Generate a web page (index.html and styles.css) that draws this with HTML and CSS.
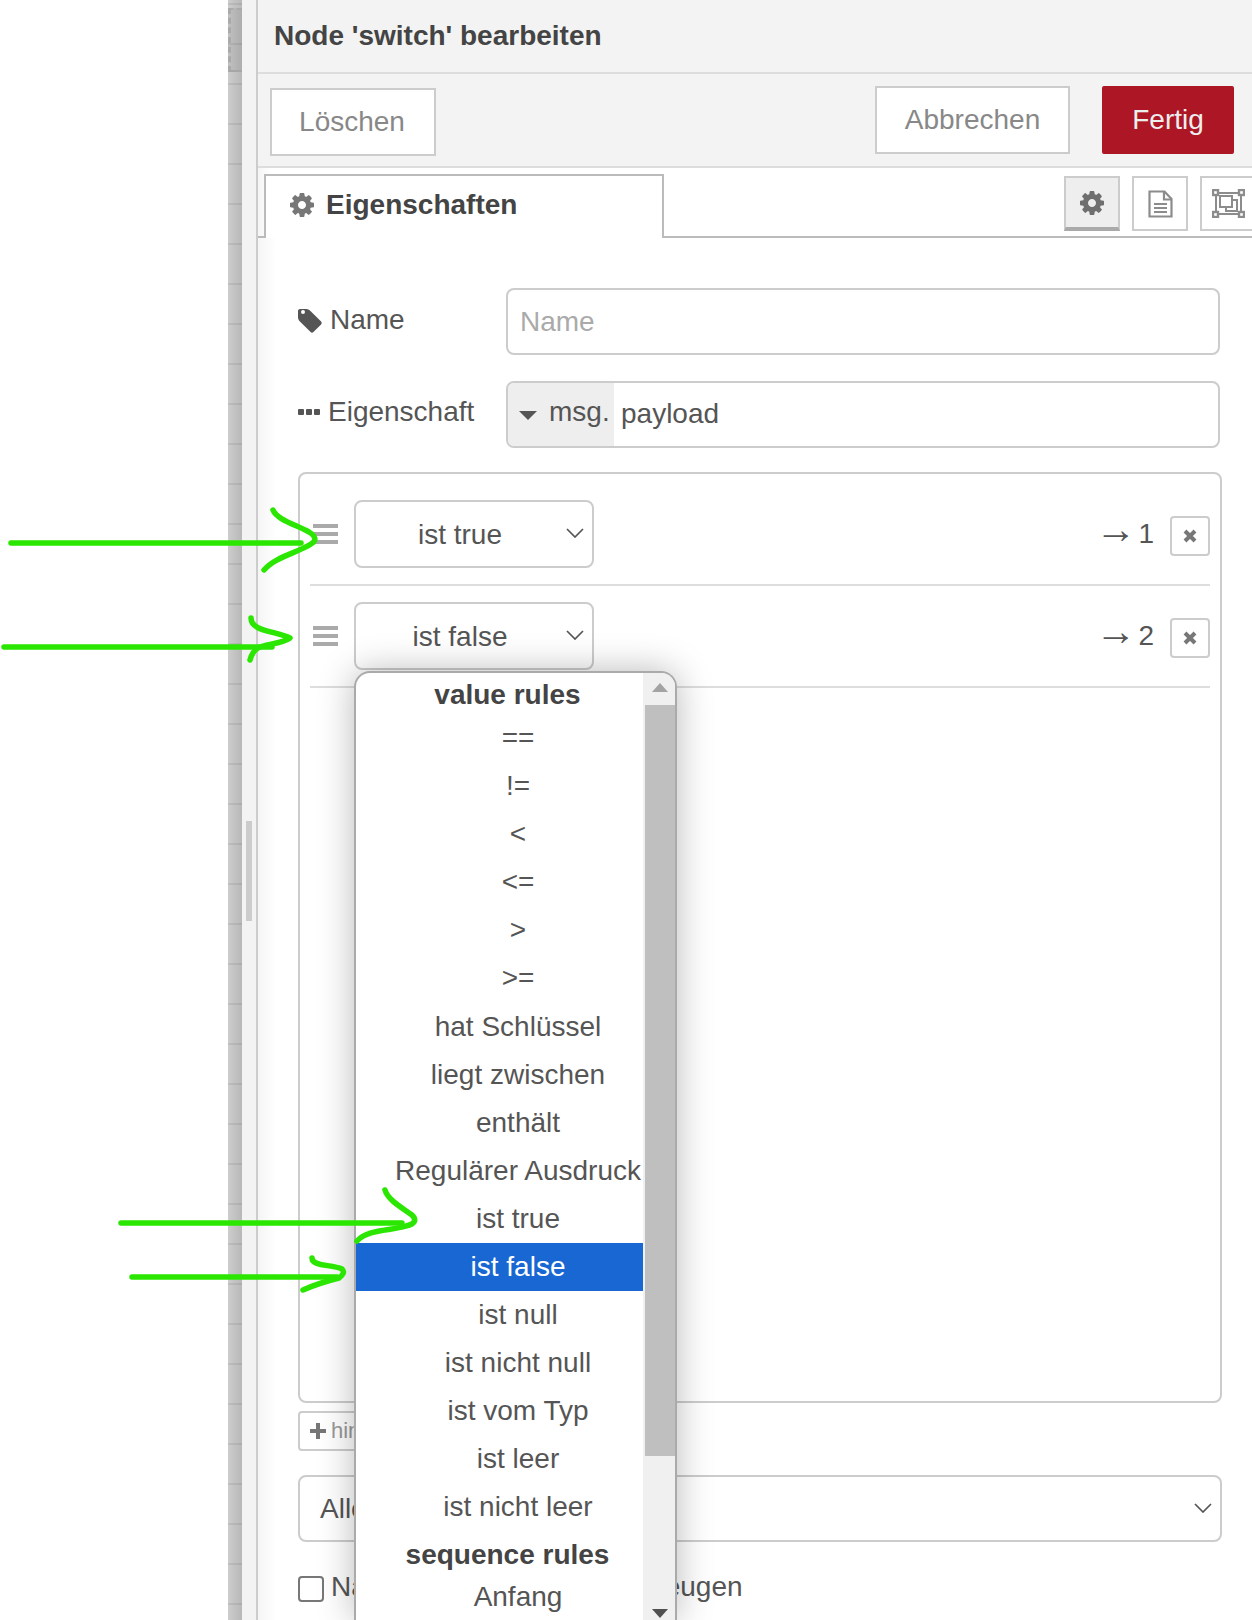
FILE: index.html
```html
<!DOCTYPE html>
<html lang="de">
<head>
<meta charset="utf-8">
<title>Node 'switch' bearbeiten</title>
<link rel="stylesheet" href="styles.css">
</head>
<body>
<div class="app">
  <div class="blank"></div>
  <div class="workspace"><div class="ghost-node"></div></div>
  <div class="sash"><div class="sash-handle"></div></div>
  <main class="tray">
    <header class="tray-title">Node 'switch' bearbeiten</header>
    <div class="toolbar">
      <button class="btn btn-delete">Löschen</button>
      <button class="btn btn-cancel">Abbrechen</button>
      <button class="btn btn-done">Fertig</button>
    </div>
    <div class="tabs">
      <div class="tab">
        <svg class="tab-gear" viewBox="0 0 1536 1536"><path d="M1024 768q0-106-75-181t-181-75-181 75-75 181 75 181 181 75 181-75 75-181zm512-109v222q0 12-8 23t-20 13l-185 28q-19 54-39 91 35 50 107 138 10 12 10 25t-9 23q-27 37-99 108t-94 71q-12 0-26-9l-138-108q-44 23-91 38-16 136-29 186-7 28-36 28h-222q-14 0-24.5-8.5t-11.5-21.5l-28-184q-49-16-90-37l-141 107q-10 9-25 9-14 0-25-11-126-114-165-168-7-10-7-23 0-12 8-23 15-21 51-66.5t54-70.5q-27-50-41-99l-183-27q-13-2-21-12.5t-8-23.5v-222q0-12 8-23t19-13l186-28q14-46 39-92-40-57-107-138-10-12-10-24 0-10 9-23 26-36 98.5-107.5t94.5-71.5q13 0 26 10l138 107q44-23 91-38 16-136 29-186 7-28 36-28h222q14 0 24.5 8.5t11.5 21.5l28 184q49 16 90 37l142-107q9-9 24-9 13 0 25 10 129 119 165 170 7 8 7 22 0 12-8 23-15 21-51 66.5t-54 70.5q26 50 41 98l183 28q13 2 21 12.5t8 23.5z"/></svg>
        <span>Eigenschaften</span>
      </div>
      <div class="tab-icons">
        <div class="tab-icon tab-icon-active">
          <svg class="icon-gear" viewBox="0 0 1536 1536"><path d="M1024 768q0-106-75-181t-181-75-181 75-75 181 75 181 181 75 181-75 75-181zm512-109v222q0 12-8 23t-20 13l-185 28q-19 54-39 91 35 50 107 138 10 12 10 25t-9 23q-27 37-99 108t-94 71q-12 0-26-9l-138-108q-44 23-91 38-16 136-29 186-7 28-36 28h-222q-14 0-24.5-8.5t-11.5-21.5l-28-184q-49-16-90-37l-141 107q-10 9-25 9-14 0-25-11-126-114-165-168-7-10-7-23 0-12 8-23 15-21 51-66.5t54-70.5q-27-50-41-99l-183-27q-13-2-21-12.5t-8-23.5v-222q0-12 8-23t19-13l186-28q14-46 39-92-40-57-107-138-10-12-10-24 0-10 9-23 26-36 98.5-107.5t94.5-71.5q13 0 26 10l138 107q44-23 91-38 16-136 29-186 7-28 36-28h222q14 0 24.5 8.5t11.5 21.5l28 184q49 16 90 37l142-107q9-9 24-9 13 0 25 10 129 119 165 170 7 8 7 22 0 12-8 23-15 21-51 66.5t-54 70.5q26 50 41 98l183 28q13 2 21 12.5t8 23.5z"/></svg>
        </div>
        <div class="tab-icon">
          <svg class="icon-doc" viewBox="0 0 25 28" fill="none" stroke="#8c8c8c" stroke-width="2.2"><path d="M1.5 1.5h15l7 7.5v17.5h-22z"/><path d="M16 2v7.5h7"/><path d="M6 14h13M6 18h13M6 22h13"/></svg>
        </div>
        <div class="tab-icon">
          <svg class="icon-frame" viewBox="0 0 33 29" preserveAspectRatio="none" fill="none" stroke="#8c8c8c" stroke-width="2"><path d="M4 4h25v21H4z"/><rect x="1" y="1" width="5" height="5" fill="#fff" stroke-width="2.4"/><rect x="27" y="1" width="5" height="5" fill="#fff" stroke-width="2.4"/><rect x="1" y="23" width="5" height="5" fill="#fff" stroke-width="2.4"/><rect x="27" y="23" width="5" height="5" fill="#fff" stroke-width="2.4"/><path d="M8 7h12v11H8z"/><path d="M14 18v4h11V11h-5"/></svg>
        </div>
      </div>
    </div>
    <form class="form">
      <div class="form-row">
        <label class="form-label">
          <svg class="icon-tag" viewBox="0 0 1664 1664"><path fill-rule="evenodd" d="M448 320a128 128 0 1 0 0 256a128 128 0 1 0 0-256zM1643 1152q0 53-37 90l-491 492q-39 37-91 37-53 0-90-37l-715-716q-38-37-64.5-101t-26.5-117v-416q0-52 38-90t90-38h416q53 0 117 26.5t102 64.5l715 714q37 39 37 91z" transform="translate(-128 -128)"/></svg>
          <span>Name</span>
        </label>
        <div class="field"><span class="placeholder">Name</span></div>
      </div>
      <div class="form-row">
        <label class="form-label form-label-tight">
          <svg class="icon-dots" viewBox="0 0 22 6"><rect width="6" height="6" rx="1"/><rect x="8" width="6" height="6" rx="1"/><rect x="16" width="6" height="6" rx="1"/></svg>
          <span>Eigenschaft</span>
        </label>
        <div class="field field-typed">
          <div class="type-select"><span class="caret"></span><span>msg.</span></div>
          <span class="field-value">payload</span>
        </div>
      </div>
      <div class="rule-box">
        <div class="rule">
          <div class="handle"><i></i><i></i><i></i></div>
          <div class="select rule-select"><span>ist true</span><svg class="chevron" viewBox="0 0 18 10"><path d="M1 1l8 8 8-8"/></svg></div>
          <div class="port"><span class="port-arrow">→</span>1</div>
          <div class="remove"><svg viewBox="0 0 14 14"><path d="M2 2l10 10M12 2L2 12"/></svg></div>
        </div>
        <div class="rule">
          <div class="handle"><i></i><i></i><i></i></div>
          <div class="select rule-select"><span>ist false</span><svg class="chevron" viewBox="0 0 18 10"><path d="M1 1l8 8 8-8"/></svg></div>
          <div class="port"><span class="port-arrow">→</span>2</div>
          <div class="remove"><svg viewBox="0 0 14 14"><path d="M2 2l10 10M12 2L2 12"/></svg></div>
        </div>
      </div>
      <div class="add-btn"><svg class="icon-plus" viewBox="0 0 16 16"><path d="M6 0h4v6h6v4h-6v6H6v-6H0V6h6z"/></svg><span>hinzufügen</span></div>
      <div class="select wide-select"><span>Alle Regeln prüfen</span><svg class="chevron" viewBox="0 0 18 10"><path d="M1 1l8 8 8-8"/></svg></div>
      <label class="check-row"><span class="check"></span><span class="check-text">Nachrichtenfolgen neu erzeugen</span></label>
    </form>
  </main>

  <div class="menu">
    <div class="menu-list">
      <div class="group">value rules</div>
      <div class="opt opt-sym">==</div>
      <div class="opt opt-sym">!=</div>
      <div class="opt opt-sym">&lt;</div>
      <div class="opt opt-sym">&lt;=</div>
      <div class="opt opt-sym">&gt;</div>
      <div class="opt opt-sym">&gt;=</div>
      <div class="opt">hat Schlüssel</div>
      <div class="opt">liegt zwischen</div>
      <div class="opt">enthält</div>
      <div class="opt">Regulärer Ausdruck</div>
      <div class="opt">ist true</div>
      <div class="opt opt-selected">ist false</div>
      <div class="opt">ist null</div>
      <div class="opt">ist nicht null</div>
      <div class="opt">ist vom Typ</div>
      <div class="opt">ist leer</div>
      <div class="opt">ist nicht leer</div>
      <div class="group group-seq">sequence rules</div>
      <div class="opt">Anfang</div>
    </div>
    <div class="scrollbar">
      <div class="scroll-btn"><span class="arrow-up"></span></div>
      <div class="scroll-thumb"></div>
      <div class="scroll-rest"></div>
      <div class="scroll-end"><span class="arrow-down"></span></div>
    </div>
  </div>

  <svg class="marks" viewBox="0 0 1252 1620" fill="none" stroke="#2ae600" stroke-width="5.5" stroke-linecap="round" stroke-linejoin="round">
    <path d="M11 543H301"/>
    <path d="M273 510c4 10 24 15 36 22c8 5 7 9 2 12c-14 9-36 13-47 26"/>
    <path d="M4 647H272"/>
    <path d="M251 618c0 14 26 13 39 20c-8 6-26 6-32 10c-5 3-7 8-8 12"/>
    <path d="M121 1223H402"/>
    <path d="M385 1190c3 10 16 17 27 25c5 5 3 9-6 11c-16 5-38 3-49 15"/>
    <path d="M132 1277H337"/>
    <path d="M312 1258c0 9 20 6 30 11c3 3 1 6-3 9c-12 3-25 7-36 12"/>
  </svg>
</div>
</body>
</html>
```
FILE: styles.css
```css
* { box-sizing: border-box; }
html, body { margin: 0; padding: 0; background: #fff; }
body { font-family: "Liberation Sans", Arial, sans-serif; font-size: 28px; color: #555; }
.app { position: relative; display: flex; width: 1252px; height: 1620px; overflow: hidden; }
.blank { width: 228px; flex: none; background: #fff; }
.workspace {
  width: 14px; flex: none; padding-top: 8px;
  background:
    repeating-linear-gradient(to bottom, transparent 0 3px, rgba(0,0,0,.07) 3px 5px, transparent 5px 40px),
    linear-gradient(to right, #cdcdcd, #b8b8b8);
}
.ghost-node { height: 64px; background: rgba(0,0,0,.06); border-left: 3px dashed #aaa; border-top: 2px dashed #aaa; border-bottom: 2px solid #a6a6a6; }
.sash { width: 14px; flex: none; background: #f3f3f3; padding: 821px 4px 0; }
.sash-handle { height: 100px; background: #ccc; }
.tray {
  flex: 1; min-width: 0; display: flex; flex-direction: column; overflow: hidden;
  border-left: 2px solid #ccc; background: #fff;
}
.tray-title {
  height: 74px; flex: none; padding: 14px 0 0 16px; background: #f3f3f3; border-bottom: 2px solid #ddd;
  line-height: 44px; font-weight: bold; color: #444;
}
.toolbar {
  height: 94px; flex: none; display: flex; align-items: flex-start; padding: 12px 18px 0 12px;
  background: #f3f3f3; border-bottom: 2px solid #ddd;
}
.btn { font: inherit; height: 68px; padding: 0; border: 2px solid #ccc; background: #fff; color: #888; }
.btn-delete { width: 166px; margin-top: 2px; padding-right: 2px; }
.btn-cancel { width: 195px; margin-left: auto; }
.btn-done { width: 132px; margin-left: 32px; background: #ad1625; border-color: #ad1625; color: #eee; border-radius: 2px; }
.tabs { height: 70px; flex: none; display: flex; align-items: flex-start; border-bottom: 2px solid #bbb; background: linear-gradient(to right, #f5f5f5, #fff 14px); }
.tab {
  width: 400px; height: 64px; flex: none; margin: 6px 0 0 6px; padding-left: 24px; display: flex; align-items: center; gap: 12px;
  border: 2px solid #bbb; border-bottom: none; background: #fff; font-weight: bold; color: #444; padding-bottom: 4px;
}
.tab-gear { width: 24px; height: 24px; fill: #777; flex: none; }
.tab-icons { display: flex; flex: none; gap: 12px; margin: 8px 0 0 400px; }
.tab-icon { width: 56px; height: 55px; flex: none; border: 2px solid #ccc; display: flex; align-items: center; justify-content: center; background: #fff; }
.tab-icon-active { background: #eee; border-bottom: 4px solid #aaa; }
.icon-gear { width: 24px; height: 24px; fill: #6f6f6f; }
.icon-doc { width: 25px; height: 28px; }
.icon-frame { width: 33px; height: 29px; }
.form { flex: 1; padding: 50px 30px 0 40px; display: flex; flex-direction: column; background: linear-gradient(to right, #f5f5f5, #fff 18px); }
.form-row { display: flex; margin: 0 2px 26px 0; height: 67px; }
.form-row + .form-row { margin-bottom: 24px; }
.form-label { width: 208px; flex: none; display: flex; align-items: center; gap: 6px; padding-bottom: 3px; }
.form-label-tight { gap: 8px; padding-bottom: 6px; }
.icon-tag { width: 26px; height: 26px; fill: #555; flex: none; }
.icon-dots { width: 22px; height: 6px; fill: #555; flex: none; }
.field { flex: 1; display: flex; align-items: center; border: 2px solid #ccc; border-radius: 8px; overflow: hidden; padding-left: 12px; background: #fff; }
.placeholder { color: #aaa; }
.field-typed { padding-left: 0; }
.type-select { width: 106px; align-self: stretch; flex: none; display: flex; align-items: center; gap: 12px; padding: 0 0 6px 11px; background: #eee; }
.caret { width: 0; height: 0; margin-top: 8px; border: solid transparent; border-width: 9px 9px 0; border-top-color: #555; }
.field-value { padding: 0 0 2px 7px; }
.rule-box { height: 931px; border: 2px solid #ccc; border-radius: 8px; padding: 10px 10px 0; background: #fff; }
.rule { display: flex; align-items: center; padding: 16px 0 16px 3px; border-bottom: 2px solid #ddd; }
.handle { width: 25px; flex: none; display: flex; flex-direction: column; gap: 4px; margin-right: 16px; }
.handle i { display: block; height: 4px; background: #aaa; }
.select { display: flex; align-items: center; height: 67px; border: 2px solid #ccc; border-radius: 8px; background: #fff; position: relative; }
.rule-select { width: 240px; height: 68px; flex: none; padding: 2px 28px 0 0; justify-content: center; }
.chevron { width: 18px; height: 10px; fill: none; stroke: #555; stroke-width: 1.7; position: absolute; right: 8px; top: 26px; }
.port { margin-left: auto; margin-right: 16px; }
.port-arrow { font-size: 41px; line-height: 0; margin-right: 2px; }
.remove { width: 40px; height: 40px; flex: none; margin-top: 4px; border: 2px solid #ccc; border-radius: 4px; display: flex; align-items: center; justify-content: center; }
.remove svg { width: 14px; height: 14px; fill: none; stroke: #777; stroke-width: 4; }
.add-btn { width: 190px; height: 40px; margin-top: 8px; border: 2px solid #ccc; border-radius: 4px; display: flex; align-items: center; gap: 5px; padding-left: 10px; font-size: 22px; color: #999; background: #fff; }
.icon-plus { width: 16px; height: 16px; fill: #777; flex: none; }
.wide-select { margin-top: 24px; padding-left: 20px; }
.check-row { display: flex; align-items: center; gap: 7px; margin-top: 29px; }
.check { width: 26px; height: 26px; flex: none; border: 2px solid #777; border-radius: 4px; background: #fff; }
.check-text { word-spacing: 3.4px; padding-bottom: 4px; }
.menu {
  position: absolute; left: 354px; top: 671px; width: 323px; height: 949px; display: flex; overflow: hidden;
  background: #fff; border: 2px solid #aaa; border-bottom: none; border-radius: 16px 16px 0 0;
  box-shadow: 0 0 36px rgba(0,0,0,.28);
}
.menu-list { width: 287px; flex: none; }
.group { height: 42px; padding-left: 16px; line-height: 44px; text-align: center; font-weight: bold; color: #444; }
.group-seq { line-height: 48px; }
.opt { height: 48px; line-height: 47px; text-align: center; padding-left: 37px; white-space: nowrap; }
.opt-sym { line-height: 45px; }
.opt-selected { background: #1967d2; color: #fff; }
.scrollbar { width: 32px; flex: none; display: flex; flex-direction: column; background: #f0f0f0; padding-left: 2px; }
.scroll-btn { height: 32px; flex: none; display: flex; justify-content: center; padding-top: 10px; }
.arrow-up { width: 0; height: 0; border: solid transparent; border-width: 0 8px 9px; border-bottom-color: #a3a3a3; }
.scroll-thumb { height: 751px; flex: none; background: #bfbfbf; }
.scroll-rest { flex: 1; }
.scroll-end { height: 14px; flex: none; display: flex; justify-content: center; padding-top: 3px; }
.arrow-down { width: 0; height: 0; border: solid transparent; border-width: 9px 8px 0; border-top-color: #505050; }
.marks { position: absolute; left: 0; top: 0; width: 1252px; height: 1620px; pointer-events: none; }
```
